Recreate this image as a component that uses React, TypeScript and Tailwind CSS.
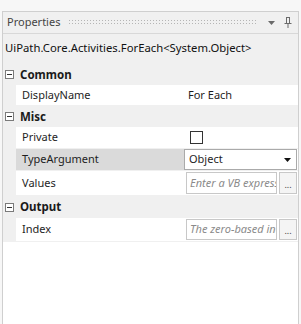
import { useState } from "react";

const MinusBox = () => (
  <span className="w-[9px] h-[9px] border border-[#7a7a7a] bg-white flex items-center justify-center shrink-0">
    <span className="w-[5px] h-px bg-[#333]" />
  </span>
);

const Category = ({ name, h = "h-[21px]" }: { name: string; h?: string }) => (
  <div className={`${h} flex items-center gap-[6px] pl-[2px] bg-[#f0f0f0]`}>
    <MinusBox />
    <span className="font-bold text-[11.5px] text-[#1a1a1a]">{name}</span>
  </div>
);

const Row = ({
  label,
  selected,
  h = "h-[22px]",
  children,
}: {
  label: string;
  selected?: boolean;
  h?: string;
  children: React.ReactNode;
}) => (
  <div className={`${h} flex pl-[13px] bg-[#f0f0f0]`}>
    <div
      className={`w-[168px] shrink-0 flex items-center pl-[6px] border-b border-[#f0f0f0] ${
        selected ? "bg-[#dadada]" : "bg-white"
      }`}
    >
      {label}
    </div>
    <div className="flex-1 min-w-0 flex items-center bg-white border-b border-[#f0f0f0] pr-[1px]">
      {children}
    </div>
  </div>
);

const ExprBox = ({ hint }: { hint: string }) => (
  <div className="flex items-center gap-[2px] w-full h-full py-[1px] pl-[2px]">
    <div className="flex-1 min-w-0 h-full border border-[#c8c8c8] flex items-center pl-[3px] italic text-[#8a8a8a] overflow-hidden whitespace-nowrap">
      {hint}
    </div>
    <div className="w-[18px] shrink-0 h-full border border-[#c8c8c8] bg-[#f4f4f4] flex items-end justify-center pb-[4px] text-[9px] leading-none text-[#444]">
      ...
    </div>
  </div>
);

export default function App() {
  const [priv, setPriv] = useState(false);
  return (
    <div
      className="w-[301px] h-[324px] bg-[#f7f7f7] pt-[11px] text-[11px] text-[#1e1e1e]"
      style={{ fontFamily: '"Noto Sans", "Open Sans", sans-serif' }}
    >
      <div className="h-[313px] mx-[2px] border border-b-0 border-[#cfcfcf] bg-white flex flex-col">
        {/* title bar */}
        <div className="h-[22px] bg-[#f0f0f0] flex items-center pl-[4px] pr-[6px] border-b border-[#d8d8d8]">
          <span className="text-[#444]">Properties</span>
          <div className="flex-1 ml-[8px] mr-[6px] h-[7px] bg-[radial-gradient(#b5b5b5_0.6px,transparent_0.8px)] bg-[length:3px_3px]" />
          <svg width="7" height="4" viewBox="0 0 7 4" className="ml-[4px]">
            <path d="M0 0h7L3.5 4z" fill="#6a6a6a" />
          </svg>
          <svg width="8" height="11" viewBox="0 0 8 11" className="ml-[9px]">
            <path d="M2 0.5h4M2.5 0.5v6M5.5 0.5v6M0.5 6.5h7M4 6.5v4.5" stroke="#6a6a6a" fill="none" />
          </svg>
        </div>
        {/* type name */}
        <div className="h-[28px] bg-[#f0f0f0] flex items-center pl-[2px] text-[11.3px] text-[#111]">
          UiPath.Core.Activities.ForEach&lt;System.Object&gt;
        </div>
        <div className="h-[2px] bg-[#f0f0f0]" />
        <Category name="Common" />
        <Row label="DisplayName" h="h-[21px]">
          <span className="pl-[4px]">For Each</span>
        </Row>
        <Category name="Misc" />
        <Row label="Private">
          <button
            onClick={() => setPriv(!priv)}
            className="ml-[6px] w-[13px] h-[13px] border border-[#333] bg-white"
          />
        </Row>
        <Row label="TypeArgument" selected>
          <div className="w-full h-full border border-[#aaa] flex items-center justify-between pl-[4px] pr-[5px]">
            <span>Object</span>
            <svg width="7" height="4" viewBox="0 0 7 4">
              <path d="M0 0h7L3.5 4z" fill="#111" />
            </svg>
          </div>
        </Row>
        <Row label="Values" h="h-[25px]">
          <ExprBox hint="Enter a VB expression" />
        </Row>
        <Category name="Output" h="h-[22px]" />
        <Row label="Index" h="h-[24px]">
          <ExprBox hint="The zero-based index" />
        </Row>
        <div className="flex-1 bg-white" />
      </div>
    </div>
  );
}
